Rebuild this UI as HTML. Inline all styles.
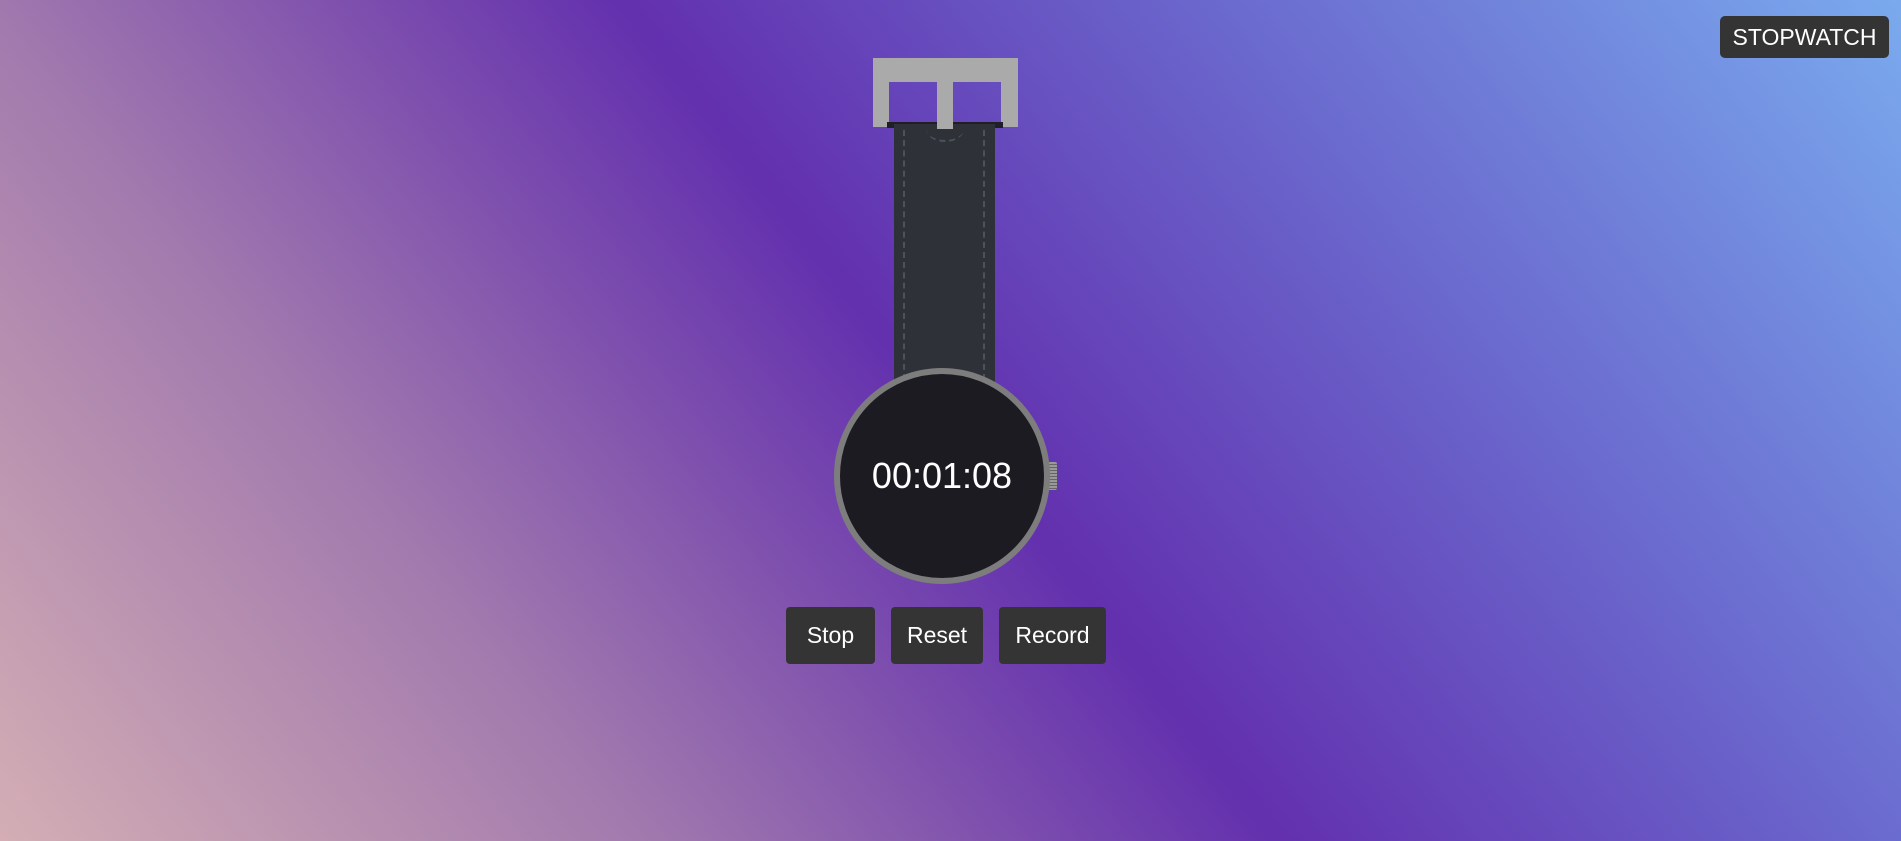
<!DOCTYPE html>
<html><head><meta charset="utf-8"><style>
html,body{margin:0;padding:0;width:1901px;height:841px;overflow:hidden}
body{position:relative;font-family:"Liberation Sans",Arial,sans-serif;
background:linear-gradient(52deg,#d4aeb4 0%,#a27aae 25%,#6330ae 50%,#6a66cc 72%,#7aaaee 100%);}
.abs{position:absolute}
.g{position:absolute;background:#aaa}
.btn{position:absolute;background:#343434;color:#fff;border-radius:4px;font-size:23px;display:flex;align-items:center;justify-content:center;top:607px;height:57px}
</style></head><body>
<div class="btn" style="left:1720px;top:16px;width:169px;height:42px;font-size:23px;border-radius:5px">STOPWATCH</div>
<!-- buckle -->
<div class="g" style="left:873px;top:58px;width:145px;height:24px"></div>
<div class="g" style="left:873px;top:58px;width:16px;height:69px"></div>
<div class="g" style="left:1001px;top:58px;width:17px;height:69px"></div>
<div class="g" style="left:937px;top:58px;width:16px;height:72px"></div>
<!-- strap -->
<div class="abs" style="left:887px;top:122px;width:116px;height:6px;background:#1f2026"></div>
<div class="abs" style="left:894px;top:124px;width:101px;height:258px;background:#2e3238"></div>
<div class="g" style="left:937px;top:120px;width:16px;height:9px"></div>
<div class="abs" style="left:903px;top:130px;width:0;height:250px;border-left:2px dashed #4d5158"></div>
<div class="abs" style="left:983px;top:130px;width:0;height:250px;border-left:2px dashed #4d5158"></div>
<div class="abs" style="left:926px;top:116px;width:38px;height:24px;border-radius:50%;border-bottom:2px dashed #4d5158"></div>
<!-- crown -->
<div class="abs" style="left:1047px;top:462px;width:10px;height:28px;background:repeating-linear-gradient(#999 0 2px,#666 2px 3px);border-radius:2px"></div>
<!-- face -->
<div class="abs" style="left:834px;top:368px;width:204px;height:204px;border:6px solid #7d7d7d;border-radius:50%;background:#1c1b22;color:#fff;font-size:36px;display:flex;align-items:center;justify-content:center">00:01:08</div>
<div class="btn" style="left:786px;width:89px">Stop</div>
<div class="btn" style="left:891px;width:92px">Reset</div>
<div class="btn" style="left:999px;width:107px">Record</div>
</body></html>
